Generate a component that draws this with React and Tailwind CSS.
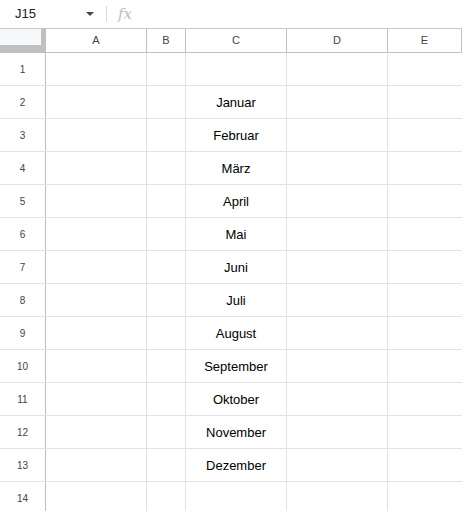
import React from "react";

const months = ["", "Januar", "Februar", "März", "April", "Mai", "Juni", "Juli", "August", "September", "Oktober", "November", "Dezember", ""];
const cols = [
  { l: "A", w: "w-[101px]" },
  { l: "B", w: "w-[39px]" },
  { l: "C", w: "w-[101px]" },
  { l: "D", w: "w-[101px]" },
  { l: "E", w: "flex-1" },
];

export default function App() {
  return (
    <div className="w-[462px] h-[511px] overflow-hidden bg-white" style={{ fontFamily: "Arial, 'Liberation Sans', sans-serif" }}>
      <div className="h-[29px] flex items-center border-b border-[#c7c7c7]">
        <div className="w-[80px] pl-[15px] text-[13px] text-[#202124]">J15</div>
        <svg width="8" height="4" viewBox="0 0 8 4" className="ml-[6px]"><path d="M0 0h8L4 4z" fill="#444" /></svg>
        <div className="ml-[12px] w-px h-[16px] bg-[#dadce0]" />
        <div className="ml-[11px] text-[15px] italic text-[#bdbdbd]" style={{ fontFamily: "'DejaVu Serif', 'Liberation Serif', serif" }}>fx</div>
      </div>
      <div className="flex h-[24px] border-b border-[#c0c0c0]">
        <div className="w-[46px] h-full relative bg-[#f8f9fa] border-r border-[#c0c0c0]">
          <div className="absolute right-0 top-0 bottom-0 w-[4px] bg-[#c0c0c0]" />
          <div className="absolute left-0 right-0 bottom-0 h-[7px] bg-[#c0c0c0]" />
        </div>
        {cols.map((c) => (
          <div key={c.l} className={`${c.w} h-full flex items-center justify-center text-[11px] text-[#444] border-r border-[#c0c0c0]`}>{c.l}</div>
        ))}
      </div>
      {months.map((m, i) => (
        <div key={i} className="flex h-[33px] border-b border-[#e2e2e3]">
          <div className="w-[46px] h-full flex items-center justify-center pt-[1px] text-[10px] text-[#444] border-r border-[#c0c0c0]">{i + 1}</div>
          <div className="w-[101px] h-full border-r border-[#e2e2e3]" />
          <div className="w-[39px] h-full border-r border-[#e2e2e3]" />
          <div className="w-[101px] h-full border-r border-[#e2e2e3] flex items-center justify-center pt-[2px] text-[13px] text-black">{m}</div>
          <div className="w-[101px] h-full border-r border-[#e2e2e3]" />
          <div className="flex-1 h-full" />
        </div>
      ))}
    </div>
  );
}
